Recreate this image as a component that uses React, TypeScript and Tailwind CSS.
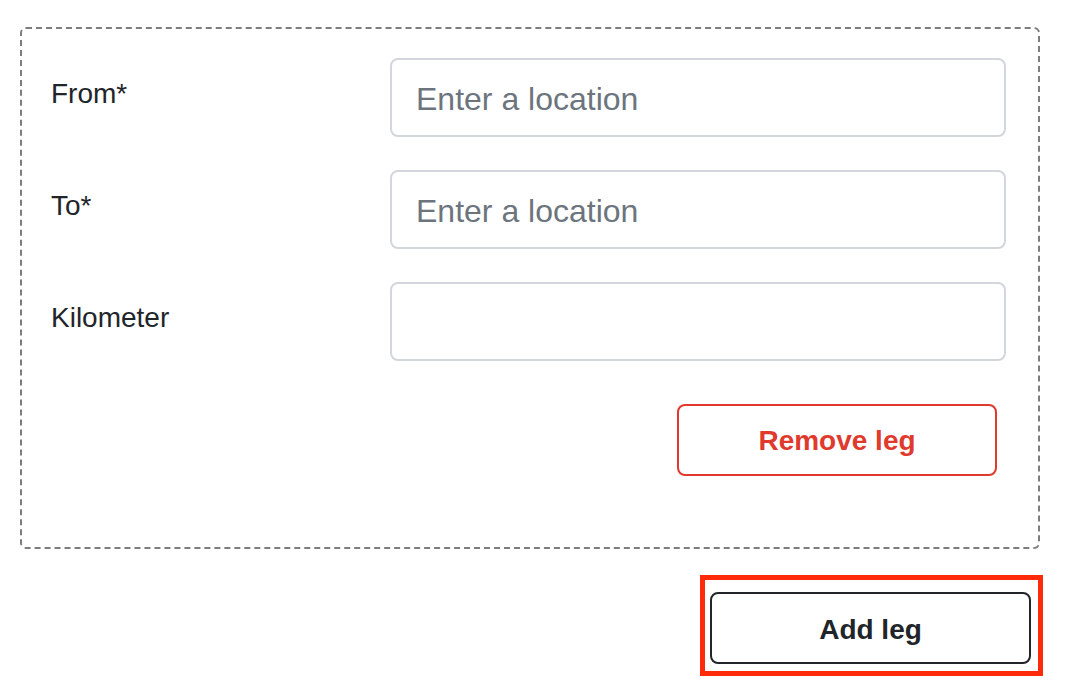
import React from "react";

const font = { fontFamily: '"Liberation Sans", Arial, Helvetica, sans-serif' };

function Row({ label, placeholder }: { label: string; placeholder?: string }) {
  return (
    <div className="flex items-start">
      <label className="w-[340px] mt-[15px] text-[28px] leading-[42px] text-[#212529] pl-[1px]">{label}</label>
      <input
        className="w-[616px] h-[79px] rounded-[8px] border-2 border-[#d3d7db] px-[24px] pt-[4px] text-[32px] text-[#212529] placeholder:text-[#6c757d] outline-none bg-white"
        placeholder={placeholder}
        style={font}
      />
    </div>
  );
}

export default function App() {
  return (
    <div className="w-[1078px] h-[688px] bg-white pl-[20px] pt-[27px]" style={font}>
      <div className="w-[1020px] border-2 border-dashed border-[#7d7d7d] rounded-[6px] pt-[29px] pl-[28px] pb-[71px]">
        <div className="flex flex-col gap-[33px]">
          <Row label="From*" placeholder="Enter a location" />
          <Row label="To*" placeholder="Enter a location" />
          <Row label="Kilometer" />
        </div>
        <div className="flex justify-start pl-[627px] mt-[43px]">
          <button className="w-[320px] h-[72px] rounded-[8px] border-2 border-[#df3a2d] text-[#df3a2d] text-[28px] font-bold bg-white pt-[2px]" style={font}>
            Remove leg
          </button>
        </div>
      </div>
      <div className="flex pl-[680px] mt-[26px]">
        <div className="border-[5px] border-[#ff2a0a] pt-[12px] pl-[5px] pr-[7px] pb-[7px]">
          <button className="w-[321px] h-[72px] rounded-[8px] border-2 border-[#212529] text-[#212529] text-[28px] font-bold bg-white pt-[3px]" style={font}>
            Add leg
          </button>
        </div>
      </div>
    </div>
  );
}
